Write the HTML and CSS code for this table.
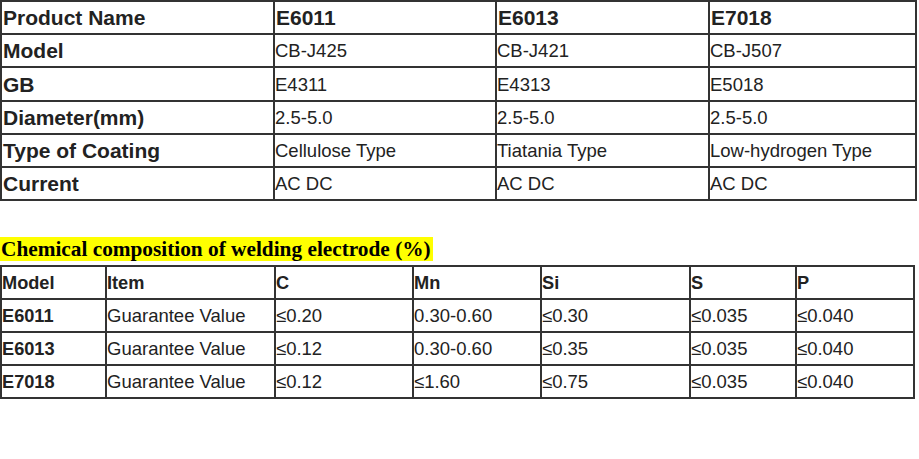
FILE: index.html
```html
<!DOCTYPE html>
<html lang="en">
<head>
<meta charset="utf-8">
<title>Welding electrode specifications</title>
<link rel="stylesheet" href="styles.css">
</head>
<body>
<div class="spec">
  <div class="cell head">Product Name</div><div class="cell head">E6011</div><div class="cell head">E6013</div><div class="cell head">E7018</div>
  <div class="cell head">Model</div><div class="cell">CB-J425</div><div class="cell">CB-J421</div><div class="cell">CB-J507</div>
  <div class="cell head">GB</div><div class="cell">E4311</div><div class="cell">E4313</div><div class="cell">E5018</div>
  <div class="cell head">Diameter(mm)</div><div class="cell">2.5-5.0</div><div class="cell">2.5-5.0</div><div class="cell">2.5-5.0</div>
  <div class="cell head">Type of Coating</div><div class="cell">Cellulose Type</div><div class="cell">Tiatania Type</div><div class="cell">Low-hydrogen Type</div>
  <div class="cell head">Current</div><div class="cell">AC DC</div><div class="cell">AC DC</div><div class="cell">AC DC</div>
</div>
<div class="title"><span class="mark">Chemical composition of welding electrode (%)</span></div>
<div class="chem">
  <div class="cell b">Model</div><div class="cell b">Item</div><div class="cell b">C</div><div class="cell b">Mn</div><div class="cell b">Si</div><div class="cell b">S</div><div class="cell b">P</div>
  <div class="cell b">E6011</div><div class="cell">Guarantee Value</div><div class="cell">≤0.20</div><div class="cell">0.30-0.60</div><div class="cell">≤0.30</div><div class="cell">≤0.035</div><div class="cell">≤0.040</div>
  <div class="cell b">E6013</div><div class="cell">Guarantee Value</div><div class="cell">≤0.12</div><div class="cell">0.30-0.60</div><div class="cell">≤0.35</div><div class="cell">≤0.035</div><div class="cell">≤0.040</div>
  <div class="cell b">E7018</div><div class="cell">Guarantee Value</div><div class="cell">≤0.12</div><div class="cell">≤1.60</div><div class="cell">≤0.75</div><div class="cell">≤0.035</div><div class="cell">≤0.040</div>
</div>
</body>
</html>
```

FILE: styles.css
```css
html, body {
  margin: 0;
  padding: 0;
  background: #ffffff;
}

body {
  font-family: "Liberation Sans", Arial, sans-serif;
  color: #222222;
}

.spec,
.chem {
  display: grid;
  gap: 2px;
  padding: 2px;
  background: #333333;
}

.spec {
  width: 913px;
  grid-template-columns: 271px 220px 211px 205px;
  grid-template-rows: 31px 31px 32px 31px 31px 31px;
}

.chem {
  width: 911px;
  margin-top: 4px;
  grid-template-columns: 103px 167px 136px 126px 147px 104px 116px;
  grid-template-rows: 31px 31px 31px 31px;
}

.cell {
  background: #ffffff;
  display: flex;
  align-items: center;
  padding: 1px 0 0 0;
  font-size: 18.5px;
  white-space: nowrap;
  overflow: hidden;
}

.spec .head {
  font-weight: bold;
  font-size: 21px;
  padding-left: 1px;
}

.chem .b {
  font-weight: bold;
  font-size: 18.2px;
}

.title {
  margin-top: 36px;
  height: 24px;
  line-height: 24px;
  font-family: "Liberation Serif", "Times New Roman", serif;
  font-weight: bold;
  font-size: 21.3px;
  color: #000000;
}

.mark {
  background: #ffff00;
  padding: 0 2px 0 1px;
}
```
